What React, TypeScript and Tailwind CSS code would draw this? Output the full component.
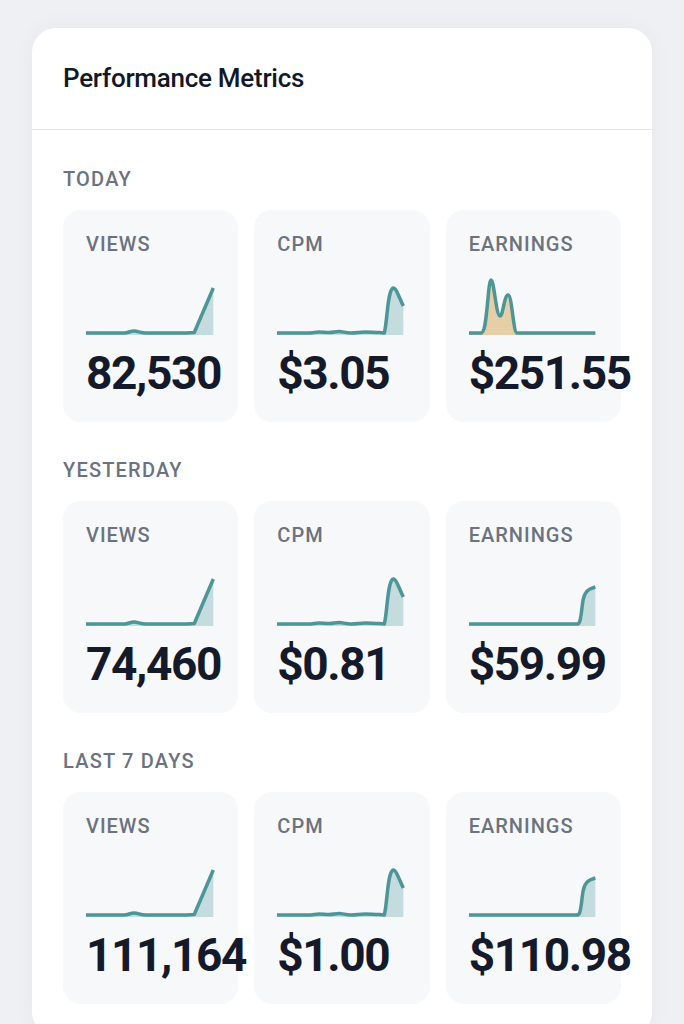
import React from "react";

type Metric = {
  label: string;
  value: string;
  line: string;
  area: string;
  fill: string;
};

const TEAL_FILL = "#c4dcdd";
const TAN_FILL = "#e6cea6";

// sparkline paths, viewBox 0 0 129 58, baseline at y=55
const VIEWS_LINE =
  "M0 55 L38 55 C42 55 44 53 48 53 C52 53 54 55 60 55 L100 55 L108 54.5 L127 10";
const VIEWS_AREA = VIEWS_LINE + " L127 57 L0 57 Z";

const CPM_LINE =
  "M0 55 L30 55 C36 55 38 54 42 54 C46 54 48 54.5 52 54.5 C56 54.5 58 53.5 62 53.5 C66 53.5 68 55 74 55 C80 55 82 54 88 54 C94 54 96 54.5 102 54.5 L107 55 C110 45 110 12 116 10 C119 10 122 20 126 28";
const CPM_AREA = CPM_LINE + " L126 57 L0 57 Z";

const EARN_SPIKES_LINE =
  "M0 55 L12 55 C16 55 17 40 19 20 C20 8 21 2 22 2 C25 2 27 38 31 38 C34 38 35 17 39 17 C43 17 44 55 48 55 L126 55";
const EARN_SPIKES_AREA = EARN_SPIKES_LINE + " L126 57 L0 57 Z";

const EARN_STEP_LINE =
  "M0 55 L108 55 C112 55 112 40 114 30 C116 22 119 20 126 18";
const EARN_STEP_AREA = EARN_STEP_LINE + " L126 57 L0 57 Z";

const SECTIONS: { title: string; metrics: Metric[] }[] = [
  {
    title: "TODAY",
    metrics: [
      { label: "VIEWS", value: "82,530", line: VIEWS_LINE, area: VIEWS_AREA, fill: TEAL_FILL },
      { label: "CPM", value: "$3.05", line: CPM_LINE, area: CPM_AREA, fill: TEAL_FILL },
      { label: "EARNINGS", value: "$251.55", line: EARN_SPIKES_LINE, area: EARN_SPIKES_AREA, fill: TAN_FILL },
    ],
  },
  {
    title: "YESTERDAY",
    metrics: [
      { label: "VIEWS", value: "74,460", line: VIEWS_LINE, area: VIEWS_AREA, fill: TEAL_FILL },
      { label: "CPM", value: "$0.81", line: CPM_LINE, area: CPM_AREA, fill: TEAL_FILL },
      { label: "EARNINGS", value: "$59.99", line: EARN_STEP_LINE, area: EARN_STEP_AREA, fill: TEAL_FILL },
    ],
  },
  {
    title: "LAST 7 DAYS",
    metrics: [
      { label: "VIEWS", value: "111,164", line: VIEWS_LINE, area: VIEWS_AREA, fill: TEAL_FILL },
      { label: "CPM", value: "$1.00", line: CPM_LINE, area: CPM_AREA, fill: TEAL_FILL },
      { label: "EARNINGS", value: "$110.98", line: EARN_STEP_LINE, area: EARN_STEP_AREA, fill: TEAL_FILL },
    ],
  },
];

function Sparkline({ line, area, fill }: { line: string; area: string; fill: string }) {
  return (
    <svg
      className="block w-full h-[58px] overflow-visible"
      viewBox="0 0 129 58"
      preserveAspectRatio="none"
    >
      <path d={area} fill={fill} stroke="none" />
      <path
        d={line}
        fill="none"
        stroke="#4c969a"
        strokeWidth="3.5"
        strokeLinejoin="round"
        strokeLinecap="butt"
      />
    </svg>
  );
}

function MetricTile({ metric }: { metric: Metric }) {
  return (
    <div className="h-[212px] rounded-[18px] bg-[#f7f8f9] px-[23px] pt-[22px]">
      <div className="text-[20px] leading-[24px] font-medium tracking-[0.05em] text-[#6b7280]">
        {metric.label}
      </div>
      <div className="mt-[22px]">
        <Sparkline line={metric.line} area={metric.area} fill={metric.fill} />
      </div>
      <div className="mt-[14px] whitespace-nowrap text-[46px] leading-none font-bold tracking-[-0.03em] text-[#151a2a]">
        {metric.value}
      </div>
    </div>
  );
}

export default function App() {
  return (
    <div
      className="min-h-screen bg-[#eff0f3] px-8 pt-7"
      style={{ fontFamily: "Roboto, 'Liberation Sans', sans-serif" }}
    >
      <div className="rounded-[24px] bg-white shadow-[0_0_24px_rgba(0,0,0,0.04)]">
        {/* Header */}
        <div className="h-[102px] flex items-center px-[31px] border-b border-[#e5e7eb]">
          <h2 className="text-[26px] font-medium tracking-[-0.01em] text-[#111827]">
            Performance Metrics
          </h2>
        </div>

        {/* Sections */}
        <div className="px-[31px] pt-[37px] pb-8 flex flex-col gap-[36px]">
          {SECTIONS.map((section) => (
            <div key={section.title}>
              <div className="text-[20px] leading-[24px] font-medium tracking-[0.06em] text-[#6b7280]">
                {section.title}
              </div>
              <div className="mt-[19px] grid grid-cols-3 gap-4">
                {section.metrics.map((m) => (
                  <MetricTile key={m.label} metric={m} />
                ))}
              </div>
            </div>
          ))}
        </div>
      </div>
    </div>
  );
}
